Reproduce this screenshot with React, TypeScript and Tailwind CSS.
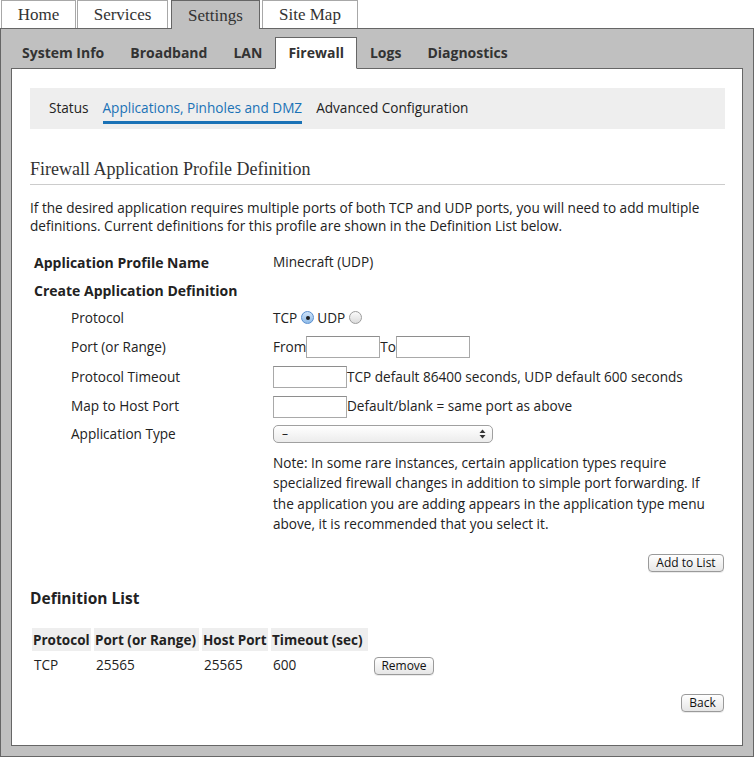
import React from "react";

const serif = "font-['Liberation_Serif','Times_New_Roman',serif]";

function TopTab({ label, active, w, ml }: { label: string; active?: boolean; w: string; ml: string }) {
  if (active) {
    return (
      <div
        className={`relative z-10 ${w} ${ml} h-[29px] bg-[#c0c0c0] border-l border-r border-t border-[#666] flex items-center justify-center pt-[1px] text-[17px] text-[#333] ${serif}`}
      >
        {label}
      </div>
    );
  }
  return (
    <div
      className={`${w} ${ml} h-[28px] bg-white border-l border-r border-t border-[#a8a8a8] flex items-center justify-center pt-[1px] text-[17px] text-[#333] ${serif}`}
    >
      {label}
    </div>
  );
}

function SubTab({ label, active }: { label: string; active?: boolean }) {
  return (
    <div
      className={`relative h-[32px] px-[12px] border flex items-center pb-[1px] font-bold text-[14px] text-[#333] ${
        active ? "z-10 bg-white border-[#666] border-b-white" : "border-transparent"
      }`}
    >
      {label}
    </div>
  );
}

function Radio({ checked }: { checked?: boolean }) {
  if (checked) {
    return (
      <span className="inline-flex items-center justify-center w-[13px] h-[13px] rounded-full border border-[#5a8fcf] bg-gradient-to-b from-[#cfe3f8] to-[#8fbbe8]">
        <span className="w-[4px] h-[4px] rounded-full bg-[#1d1d1d]" />
      </span>
    );
  }
  return (
    <span className="inline-block w-[13px] h-[13px] rounded-full border border-[#9c9c9c] bg-gradient-to-b from-[#fafafa] to-[#dcdcdc]" />
  );
}

function TextInput({ w = "w-[74px]" }: { w?: string }) {
  return <span className={`inline-block ${w} h-[22px] border border-[#a9a9a9] border-t-[#8e8e8e] bg-white`} />;
}

function MacButton({ label, w }: { label: string; w: string }) {
  return (
    <button
      className={`${w} h-[18px] rounded-[4px] border border-[#9a9a9a] bg-gradient-to-b from-white to-[#e6e6e6] text-[12px] leading-[16px] text-[#111] flex items-center justify-center shadow-[0_1px_0_rgba(0,0,0,0.08)]`}
    >
      {label}
    </button>
  );
}

function Row({ h, label, indent, bold, children }: { h: string; label: string; indent?: boolean; bold?: boolean; children?: React.ReactNode }) {
  return (
    <div className={`flex items-center ${h}`}>
      <div
        className={`w-[243px] shrink-0 ${indent ? "pl-[41px]" : "pl-[4px]"} ${
          bold ? "font-bold text-[14px] text-[#222]" : ""
        }`}
      >
        {label}
      </div>
      <div className="flex items-center">{children}</div>
    </div>
  );
}

export default function App() {
  return (
    <div className="w-[754px] h-[757px] bg-white flex flex-col font-['Open_Sans','Noto_Sans',sans-serif] text-[13.6px] text-[#222] overflow-hidden">
      {/* top tabs */}
      <div className="h-[28px] flex items-start">
        <TopTab label="Home" w="w-[75px]" ml="ml-[1px]" />
        <TopTab label="Services" w="w-[91px]" ml="ml-[1px]" />
        <TopTab label="Settings" active w="w-[89px]" ml="ml-[3px]" />
        <TopTab label="Site Map" w="w-[96px]" ml="ml-[2px]" />
      </div>

      {/* grey panel */}
      <div className="flex-1 bg-[#c0c0c0] border border-[#666] px-[10px] pb-[10px] flex flex-col">
        <div className="mt-[8px] -mb-px flex ml-[-2px]">
          <SubTab label="System Info" />
          <SubTab label="Broadband" />
          <SubTab label="LAN" />
          <SubTab label="Firewall" active />
          <SubTab label="Logs" />
          <SubTab label="Diagnostics" />
        </div>

        <div className="flex-1 bg-white border border-[#666] pt-[19px] pl-[18px] pr-[17px] flex flex-col">
          {/* sub nav */}
          <div className="h-[41px] bg-[#eeeeee] flex items-start pt-[11px] pl-[19px] gap-[14px]">
            <span className="leading-[18px] text-[#222]">Status</span>
            <span className="leading-[18px] text-[#1a72b6] pb-[4px] border-b-[3px] border-[#1a72b6]">
              Applications, Pinholes and DMZ
            </span>
            <span className="leading-[18px] text-[#222]">Advanced Configuration</span>
          </div>

          {/* heading */}
          <div className={`mt-[28px] pb-[3px] border-b border-[#cccccc] text-[18px] leading-[24px] text-[#333] ${serif}`}>
            Firewall Application Profile Definition
          </div>

          <p className="mt-[14px] leading-[18px]">
            If the desired application requires multiple ports of both TCP and UDP ports, you will need to add multiple
            definitions. Current definitions for this profile are shown in the Definition List below.
          </p>

          <div className="mt-[13px] flex flex-col">
            <Row h="h-[28px]" label="Application Profile Name" bold>
              <span>Minecraft (UDP)</span>
            </Row>
            <Row h="h-[28px]" label="Create Application Definition" bold />
            <Row h="h-[28px]" label="Protocol" indent>
              <span>TCP</span>
              <span className="ml-[4px] mr-[3px] flex">
                <Radio checked />
              </span>
              <span>UDP</span>
              <span className="ml-[4px] flex">
                <Radio />
              </span>
            </Row>
            <Row h="h-[30px]" label="Port (or Range)" indent>
              <span>From</span>
              <TextInput />
              <span>To</span>
              <TextInput />
            </Row>
            <Row h="h-[30px]" label="Protocol Timeout" indent>
              <TextInput />
              <span>TCP default 86400 seconds, UDP default 600 seconds</span>
            </Row>
            <Row h="h-[29px]" label="Map to Host Port" indent>
              <TextInput />
              <span>Default/blank = same port as above</span>
            </Row>
            <Row h="h-[26px]" label="Application Type" indent>
              <div className="w-[220px] h-[18px] rounded-[5px] border border-[#a0a0a0] bg-gradient-to-b from-white to-[#ececec] flex items-center justify-between pl-[8px] pr-[6px] text-[12px]">
                <span>–</span>
                <svg width="7" height="10" viewBox="0 0 7 10">
                  <path d="M3.5 0.5 L6.5 4 L0.5 4 Z" fill="#333" />
                  <path d="M3.5 9.5 L6.5 6 L0.5 6 Z" fill="#333" />
                </svg>
              </div>
            </Row>
            <div className="pl-[243px] pt-[6px] leading-[20.3px] whitespace-nowrap">
              Note: In some rare instances, certain application types require
              <br />
              specialized firewall changes in addition to simple port forwarding. If
              <br />
              the application you are adding appears in the application type menu
              <br />
              above, it is recommended that you select it.
            </div>
          </div>

          <div className="mt-[20px] flex justify-end pr-[1px]">
            <MacButton label="Add to List" w="w-[76px]" />
          </div>

          <div className="mt-[16px] font-bold text-[15.5px] leading-[20px] text-[#222]">Definition List</div>

          <table className="mt-[17px] ml-[-1px] w-[420px] table-fixed border-separate border-spacing-[3px] text-left">
            <thead>
              <tr className="h-[23px]">
                <th className="w-[59px] bg-[#eeeeee] px-[1px] font-bold text-[13.5px] whitespace-nowrap">Protocol</th>
                <th className="w-[105px] bg-[#eeeeee] px-[1px] font-bold text-[13.5px] whitespace-nowrap">Port (or Range)</th>
                <th className="w-[66px] bg-[#eeeeee] px-[1px] font-bold text-[13.5px] whitespace-nowrap">Host Port</th>
                <th className="w-[97px] bg-[#eeeeee] px-[1px] font-bold text-[13.5px] whitespace-nowrap">Timeout (sec)</th>
                <th className="w-[75px]" />
              </tr>
            </thead>
            <tbody>
              <tr className="h-[23px]">
                <td className="px-[2px]">TCP</td>
                <td className="px-[2px]">25565</td>
                <td className="px-[2px]">25565</td>
                <td className="px-[2px]">600</td>
                <td className="pl-[3px]">
                  <MacButton label="Remove" w="w-[60px]" />
                </td>
              </tr>
            </tbody>
          </table>

          <div className="mt-[14px] flex justify-end pr-[1px]">
            <MacButton label="Back" w="w-[43px]" />
          </div>
        </div>
      </div>
    </div>
  );
}
